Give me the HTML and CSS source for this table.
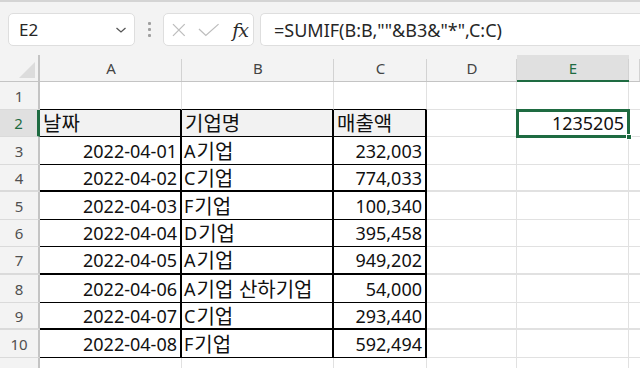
FILE: index.html
```html
<!DOCTYPE html>
<html lang="ko">
<head>
<meta charset="utf-8">
<title>Sheet1</title>
<link rel="stylesheet" href="styles.css">
</head>
<body>
<div class="app">
  <div class="topline"></div>
  <div class="formula-bar">
    <div class="name-box">
      <span class="name">E2</span>
      <svg class="chev" width="12" height="8" viewBox="0 0 12 8"><path d="M1.5 2 L6 6 L10.5 2" fill="none" stroke="#555" stroke-width="1.3"/></svg>
    </div>
    <div class="grip"><i></i><i></i><i></i></div>
    <div class="fx-box">
      <svg width="14" height="14" viewBox="0 0 14 14"><path d="M1 1 L13 13 M13 1 L1 13" stroke="#bdbdbd" stroke-width="1.3" fill="none"/></svg>
      <svg width="22" height="14" viewBox="0 0 22 14"><path d="M1 6 L8 12.5 L21 1" stroke="#bdbdbd" stroke-width="1.3" fill="none"/></svg>
      <span class="fx">fx</span>
    </div>
    <div class="formula">=SUMIF(B:B,""&amp;B3&amp;"*",C:C)</div>
  </div>

  <div class="sheet">
    <!-- column headers -->
    <div class="corner"><span class="tri"></span></div>
    <div class="ch">A</div>
    <div class="ch">B</div>
    <div class="ch">C</div>
    <div class="ch">D</div>
    <div class="ch sel">E</div>
    <div class="ch last"></div>

    <!-- row 1 -->
    <div class="rh">1</div>
    <div class="c top"></div><div class="c top"></div><div class="c top"></div>
    <div class="c"></div><div class="c"></div><div class="c last"></div>

    <!-- row 2 -->
    <div class="rh sel">2</div>
    <div class="c t head"><span class="ko">날짜</span></div>
    <div class="c t head"><span class="ko">기업명</span></div>
    <div class="c t head tr"><span class="ko">매출액</span></div>
    <div class="c"></div>
    <div class="c num active">1235205<span class="handle"></span></div>
    <div class="c last"></div>

    <!-- row 3 -->
    <div class="rh">3</div>
    <div class="c t num">2022-04-01</div><div class="c t">A<span class="ko">기업</span></div><div class="c t num tr">232,003</div>
    <div class="c"></div><div class="c"></div><div class="c last"></div>

    <!-- row 4 -->
    <div class="rh thick">4</div>
    <div class="c t num thick">2022-04-02</div><div class="c t thick">C<span class="ko">기업</span></div><div class="c t num tr thick">774,033</div>
    <div class="c thick"></div><div class="c thick"></div><div class="c last thick"></div>

    <!-- row 5 -->
    <div class="rh">5</div>
    <div class="c t num">2022-04-03</div><div class="c t">F<span class="ko">기업</span></div><div class="c t num tr">100,340</div>
    <div class="c"></div><div class="c"></div><div class="c last"></div>

    <!-- row 6 -->
    <div class="rh">6</div>
    <div class="c t num">2022-04-04</div><div class="c t">D<span class="ko">기업</span></div><div class="c t num tr">395,458</div>
    <div class="c"></div><div class="c"></div><div class="c last"></div>

    <!-- row 7 -->
    <div class="rh thick">7</div>
    <div class="c t num thick">2022-04-05</div><div class="c t thick">A<span class="ko">기업</span></div><div class="c t num tr thick">949,202</div>
    <div class="c thick"></div><div class="c thick"></div><div class="c last thick"></div>

    <!-- row 8 -->
    <div class="rh">8</div>
    <div class="c t num">2022-04-06</div><div class="c t">A<span class="ko">기업 산하기업</span></div><div class="c t num tr">54,000</div>
    <div class="c"></div><div class="c"></div><div class="c last"></div>

    <!-- row 9 -->
    <div class="rh thick">9</div>
    <div class="c t num thick">2022-04-07</div><div class="c t thick">C<span class="ko">기업</span></div><div class="c t num tr thick">293,440</div>
    <div class="c thick"></div><div class="c thick"></div><div class="c last thick"></div>

    <!-- row 10 -->
    <div class="rh">10</div>
    <div class="c t num">2022-04-08</div><div class="c t">F<span class="ko">기업</span></div><div class="c t num tr">592,494</div>
    <div class="c"></div><div class="c"></div><div class="c last"></div>

    <!-- row 11 (partly visible) -->
    <div class="rh"></div>
    <div class="c"></div><div class="c"></div><div class="c"></div>
    <div class="c"></div><div class="c"></div><div class="c last"></div>
  </div>
</div>
</body>
</html>
```

FILE: styles.css
```css
* { box-sizing: border-box; }

html, body {
  margin: 0;
  padding: 0;
  width: 640px;
  height: 368px;
  overflow: hidden;
  background: #ffffff;
  font-family: "Noto Sans", "Noto Sans CJK KR", sans-serif;
}

.app {
  width: 640px;
  height: 368px;
  background: #f3f3f3;
  display: flex;
  flex-direction: column;
}

.topline {
  height: 2px;
  background: #d4d4d4;
  flex: none;
}

/* ---------- formula bar ---------- */
.formula-bar {
  height: 53px;
  flex: none;
  display: flex;
  align-items: flex-start;
  padding: 11px 0 0 8px;
}

.name-box,
.fx-box,
.formula {
  height: 33px;
  background: #ffffff;
  border: 1px solid #dedede;
  border-radius: 5px;
  display: flex;
  align-items: center;
}

.name-box {
  width: 127px;
  padding: 0 7px 0 10px;
  justify-content: space-between;
}

.name {
  font-size: 17px;
  color: #262626;
}

.grip {
  width: 28px;
  height: 33px;
  display: flex;
  flex-direction: column;
  align-items: center;
  justify-content: center;
  gap: 3px;
}

.grip i {
  display: block;
  width: 3px;
  height: 3px;
  background: #a0a0a0;
  border-radius: 1px;
}

.fx-box {
  width: 91px;
  padding: 0 5px 0 8px;
  gap: 12px;
}

.fx {
  font-family: "DejaVu Serif", "Liberation Serif", serif;
  font-style: italic;
  font-size: 19px;
  color: #2b2b2b;
  letter-spacing: -1px;
  margin-left: 1px;
}

.formula {
  flex: 1;
  margin-left: 6px;
  border-right: none;
  border-radius: 5px 0 0 5px;
  padding-left: 13px;
  font-size: 18px;
  color: #262626;
  white-space: nowrap;
}

/* ---------- grid ---------- */
.sheet {
  flex: 1;
  display: grid;
  grid-template-columns: 40px 142px 152px 93px 90px 112px 11px;
  grid-template-rows: 27px 28px 27px 28px 27px 28px 27px 28px 28px 27px 28px 12px;
  background: #ffffff;
}

.corner {
  background: #f3f3f3;
  border-right: 2px solid #c4c4c4;
  border-bottom: 1px solid #c4c4c4;
  position: relative;
}

.tri {
  position: absolute;
  right: 3px;
  bottom: 3px;
  width: 0;
  height: 0;
  border-left: 16px solid transparent;
  border-bottom: 16px solid #dcdcdc;
}

.ch {
  background: #f3f3f3;
  border-bottom: 1px solid #c4c4c4;
  display: flex;
  align-items: center;
  justify-content: center;
  font-size: 15px;
  color: #444444;
  position: relative;
}

.ch::after {
  content: "";
  position: absolute;
  right: 0;
  top: 4px;
  bottom: 0;
  width: 1px;
  background: #d2d2d2;
}

.ch.sel {
  background: #e0e0e0;
  color: #1e6b41;
  border-bottom: 2px solid #1e6b41;
}

.rh {
  background: #f3f3f3;
  border-right: 2px solid #c4c4c4;
  border-bottom: 1px solid #dadada;
  display: flex;
  align-items: center;
  justify-content: center;
  font-size: 15px;
  color: #505050;
}

.rh.sel {
  background: #e0e0e0;
  color: #1e6b41;
  border-right: 3px solid #1e6b41;
}

.c {
  border-right: 1px solid #e1e1e1;
  border-bottom: 1px solid #e1e1e1;
  display: flex;
  align-items: center;
  padding: 0 3px 0 2px;
  font-size: 18px;
  line-height: 22px;
  color: #111111;
  white-space: nowrap;
  overflow: visible;
  position: relative;
}

/* Hangul runs are set a little larger than the Latin digits */
.ko {
  font-family: "Noto Sans CJK KR", sans-serif;
  font-size: 20px;
  line-height: 22px;
  margin-left: 1px;
}

.c.last { border-right: none; }

.thick { border-bottom-width: 2px; }

.c.top { border-bottom: 1px solid #000000; }

.c.t {
  border-right: 2px solid #000000;
  border-bottom-color: #000000;
}

.c.head { background: #f2f2f2; }

.num { justify-content: flex-end; }

.c.active {
  outline: 3px solid #1e6b41;
  outline-offset: -2px;
  z-index: 2;
  padding-right: 4px;
}

.handle {
  position: absolute;
  right: -4px;
  bottom: -4px;
  width: 6px;
  height: 6px;
  background: #1e6b41;
  border: 1px solid #ffffff;
}
```
